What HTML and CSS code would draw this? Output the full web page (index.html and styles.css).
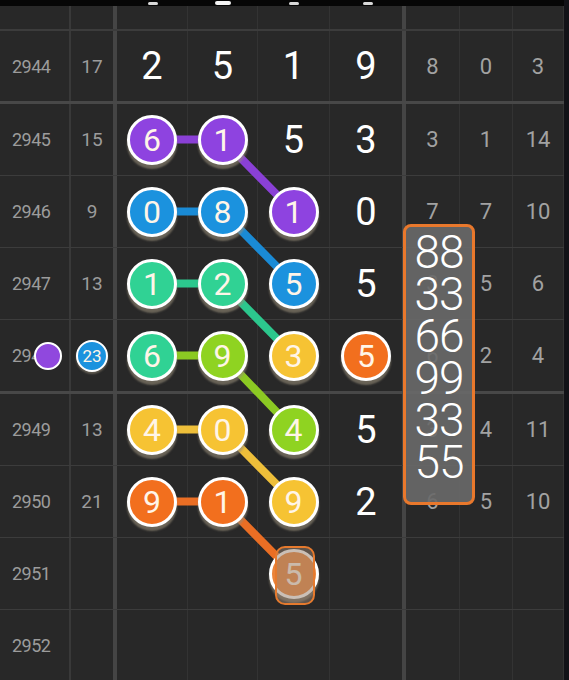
FILE: index.html
```html
<!DOCTYPE html>
<html lang="en">

<head>
    <meta charset="UTF-8">
    <meta name="viewport" content="width=device-width, initial-scale=1.0">
    <title>Trend Chart</title>
    <link rel="stylesheet" href="styles.css">
</head>

<body>

    <div class="board">
        <div class="topbar">
            <span></span><span></span>
            <span class="tick"></span>
            <span class="tick wide"></span>
            <span class="tick"></span>
            <span class="tick"></span>
            <span></span><span></span><span></span>
        </div>

        <div class="row head">
            <div class="cell no"></div>
            <div class="cell cnt"></div>
            <div class="cell"></div>
            <div class="cell"></div>
            <div class="cell"></div>
            <div class="cell end"></div>
            <div class="cell"></div>
            <div class="cell"></div>
            <div class="cell"></div>
        </div>

        <div class="row first">
            <div class="cell no">2944</div>
            <div class="cell cnt">17</div>
            <div class="cell big">2</div>
            <div class="cell big">5</div>
            <div class="cell big">1</div>
            <div class="cell big end">9</div>
            <div class="cell side">8</div>
            <div class="cell side">0</div>
            <div class="cell side">3</div>
        </div>

        <div class="row">
            <div class="cell no">2945</div>
            <div class="cell cnt">15</div>
            <div class="cell"><span class="ball purple">6</span></div>
            <div class="cell"><span class="ball purple">1</span></div>
            <div class="cell big">5</div>
            <div class="cell big end">3</div>
            <div class="cell side">3</div>
            <div class="cell side">1</div>
            <div class="cell side">14</div>
        </div>

        <div class="row">
            <div class="cell no">2946</div>
            <div class="cell cnt">9</div>
            <div class="cell"><span class="ball blue">0</span></div>
            <div class="cell"><span class="ball blue">8</span></div>
            <div class="cell"><span class="ball purple">1</span></div>
            <div class="cell big end">0</div>
            <div class="cell side">7</div>
            <div class="cell side">7</div>
            <div class="cell side">10</div>
        </div>

        <div class="row">
            <div class="cell no">2947</div>
            <div class="cell cnt">13</div>
            <div class="cell"><span class="ball teal">1</span></div>
            <div class="cell"><span class="ball teal">2</span></div>
            <div class="cell"><span class="ball blue">5</span></div>
            <div class="cell big end">5</div>
            <div class="cell side">3</div>
            <div class="cell side">5</div>
            <div class="cell side">6</div>
        </div>

        <div class="row thick">
            <div class="cell no">2948<span class="mini"></span></div>
            <div class="cell cnt"><span class="ball small blue">23</span></div>
            <div class="cell"><span class="ball teal">6</span></div>
            <div class="cell"><span class="ball lime">9</span></div>
            <div class="cell"><span class="ball yellow">3</span></div>
            <div class="cell end"><span class="ball orange">5</span></div>
            <div class="cell side">6</div>
            <div class="cell side">2</div>
            <div class="cell side">4</div>
        </div>

        <div class="row">
            <div class="cell no">2949</div>
            <div class="cell cnt">13</div>
            <div class="cell"><span class="ball yellow">4</span></div>
            <div class="cell"><span class="ball yellow">0</span></div>
            <div class="cell"><span class="ball lime">4</span></div>
            <div class="cell big end">5</div>
            <div class="cell side">3</div>
            <div class="cell side">4</div>
            <div class="cell side">11</div>
        </div>

        <div class="row">
            <div class="cell no">2950</div>
            <div class="cell cnt">21</div>
            <div class="cell"><span class="ball orange">9</span></div>
            <div class="cell"><span class="ball orange">1</span></div>
            <div class="cell"><span class="ball yellow">9</span></div>
            <div class="cell big end">2</div>
            <div class="cell side">6</div>
            <div class="cell side">5</div>
            <div class="cell side">10</div>
        </div>

        <div class="row">
            <div class="cell no">2951</div>
            <div class="cell cnt"></div>
            <div class="cell"></div>
            <div class="cell"></div>
            <div class="cell">
                <span class="ball orange pale">5</span>
                <span class="sel"></span>
            </div>
            <div class="cell end"></div>
            <div class="cell"></div>
            <div class="cell"></div>
            <div class="cell"></div>
        </div>

        <div class="row">
            <div class="cell no">2952</div>
            <div class="cell cnt"></div>
            <div class="cell"></div>
            <div class="cell"></div>
            <div class="cell"></div>
            <div class="cell end"></div>
            <div class="cell"></div>
            <div class="cell"></div>
            <div class="cell"></div>
        </div>

        <!-- trend lines between the balls -->
        <svg class="links" width="564" height="680" viewBox="0 0 564 680">
            <g stroke-width="8" stroke-linecap="round" fill="none">
                <polyline stroke="#8a40d6" points="152,139.5 222.5,139.5 293.5,211.5" />
                <polyline stroke="#1a8bd6" points="152,211.5 222.5,211.5 293.5,283.5" />
                <polyline stroke="#2cc78d" points="152,283.5 222.5,283.5 293.5,355.5" />
                <polyline stroke="#8bc923" points="152,355.5 222.5,355.5 293.5,429.5" />
                <polyline stroke="#eebf3a" points="152,429.5 222.5,429.5 293.5,501.5" />
                <polyline stroke="#ea6e24" points="152,501.5 222.5,501.5 293.5,573.5" />
            </g>
        </svg>

        <div class="picker">
            <div>88</div>
            <div>33</div>
            <div>66</div>
            <div>99</div>
            <div>33</div>
            <div>55</div>
        </div>
    </div>

</body>

</html>
```

FILE: styles.css
```css
body {
    margin: 0;
    background-color: #121217;
    font-family: 'Roboto', 'Noto Sans', sans-serif;
    overflow: hidden;
}

.board {
    position: relative;
    width: 564px;
    height: 680px;
    background-color: #282828;
    overflow: hidden;
}

.topbar,
.row {
    display: grid;
    grid-template-columns: 71px 46px 71px 70px 72px 76px 54px 53px 51px;
}

.topbar {
    height: 6px;
    background-color: #060606;
    align-items: end;
}

.tick {
    justify-self: center;
    width: 10px;
    height: 3px;
    margin-bottom: 1px;
    border-radius: 2px;
    background-color: #d8d8d8;
}

.tick.wide {
    width: 16px;
    height: 4px;
    background-color: #f4f4f4;
}

.row {
    box-sizing: border-box;
    height: 72px;
    border-bottom: 1px solid #3c3c3c;
}

.row.head {
    height: 25px;
    border-bottom-width: 2px;
}

.row.first {
    height: 73px;
    border-bottom: 3px solid #484848;
}

.row.thick {
    height: 74px;
    border-bottom: 3px solid #484848;
}

.cell {
    position: relative;
    display: flex;
    align-items: center;
    justify-content: center;
    border-right: 1px solid #333;
}

.cell.no {
    justify-content: flex-start;
    padding-left: 12px;
    border-right: 2px solid #393939;
    color: #9c9c9c;
    font-size: 18px;
    letter-spacing: -0.5px;
}

.cell.cnt {
    border-right: 4px solid #454545;
    color: #9c9c9c;
    font-size: 19px;
}

.cell.end {
    border-right: 4px solid #454545;
}

.cell.big {
    color: #fff;
    font-size: 38px;
}

.cell.side {
    color: #a2a2a2;
    font-size: 22px;
}

.ball {
    position: relative;
    z-index: 2;
    box-sizing: border-box;
    width: 50px;
    height: 50px;
    display: flex;
    align-items: center;
    justify-content: center;
    border: 3px solid #fff;
    border-radius: 50%;
    color: #fff5e8;
    font-size: 32px;
    box-shadow: 0 4px 2px rgba(150, 140, 120, 0.6);
}

.ball.small {
    width: 32px;
    height: 32px;
    border-width: 2px;
    font-size: 17px;
    box-shadow: 0 2px 2px rgba(150, 140, 120, 0.5);
}

.ball.purple { background-color: #8e43e0; }
.ball.blue { background-color: #1b92de; }
.ball.teal { background-color: #30d294; }
.ball.lime { background-color: #8fd321; }
.ball.yellow { background-color: #f6c333; }
.ball.orange { background-color: #f26f1e; }
.ball.pale { background-color: #eb843a; }

/* small marker sitting on top of the issue number */
.mini {
    position: absolute;
    z-index: 2;
    left: 34px;
    top: 22px;
    box-sizing: border-box;
    width: 28px;
    height: 28px;
    border: 2px solid #fff;
    border-radius: 50%;
    background-color: #9048de;
}

.sel {
    position: absolute;
    z-index: 3;
    left: 17px;
    top: 8px;
    box-sizing: border-box;
    width: 40px;
    height: 59px;
    border: 2px solid #e57a2e;
    border-radius: 10px;
    background-color: rgba(150, 128, 110, 0.5);
}

.links {
    position: absolute;
    left: 0;
    top: 0;
    z-index: 1;
    pointer-events: none;
}

.picker {
    position: absolute;
    z-index: 3;
    left: 403px;
    top: 224px;
    box-sizing: border-box;
    width: 72px;
    height: 281px;
    padding-top: 4px;
    border: 3px solid #e9782c;
    border-radius: 8px;
    background-color: rgba(105, 105, 105, 0.9);
    color: #fff;
    font-size: 46px;
    font-weight: 300;
    line-height: 42px;
    letter-spacing: -1px;
    text-align: center;
}
```
